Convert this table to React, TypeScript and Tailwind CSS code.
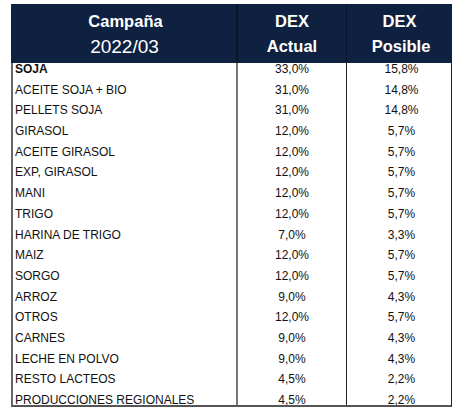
const rows: [string, string, string][] = [
  ["SOJA", "33,0%", "15,8%"],
  ["ACEITE SOJA + BIO", "31,0%", "14,8%"],
  ["PELLETS SOJA", "31,0%", "14,8%"],
  ["GIRASOL", "12,0%", "5,7%"],
  ["ACEITE GIRASOL", "12,0%", "5,7%"],
  ["EXP, GIRASOL", "12,0%", "5,7%"],
  ["MANI", "12,0%", "5,7%"],
  ["TRIGO", "12,0%", "5,7%"],
  ["HARINA DE TRIGO", "7,0%", "3,3%"],
  ["MAIZ", "12,0%", "5,7%"],
  ["SORGO", "12,0%", "5,7%"],
  ["ARROZ", "9,0%", "4,3%"],
  ["OTROS", "12,0%", "5,7%"],
  ["CARNES", "9,0%", "4,3%"],
  ["LECHE EN POLVO", "9,0%", "4,3%"],
  ["RESTO LACTEOS", "4,5%", "2,2%"],
  ["PRODUCCIONES REGIONALES", "4,5%", "2,2%"],
];

export default function App() {
  return (
    <div
      className="w-[455px] h-[411px] bg-white pt-[4px] pl-[11px] overflow-hidden text-[#111]"
      style={{ fontFamily: '"Liberation Sans", Arial, sans-serif' }}
    >
      <div className="w-[441px]">
        {/* header */}
        <div className="grid grid-cols-[225px_110px_106px] h-[59px] bg-[#0f2140] text-white">
          <div className="flex flex-col items-center pt-[5px]">
            <span className="text-[16.5px] font-bold leading-[25px] pl-[4px]">Campaña</span>
            <span className="text-[19px] leading-[25px] pl-[2px]">2022/03</span>
          </div>
          <div className="flex flex-col items-center pt-[5px] border-l-2 border-[#0a1528]">
            <span className="text-[16.5px] font-bold leading-[25px]">DEX</span>
            <span className="text-[16.5px] font-bold leading-[25px]">Actual</span>
          </div>
          <div className="flex flex-col items-center pt-[5px] border-l border-[#0a1528]">
            <span className="text-[16.5px] font-bold leading-[25px]">DEX</span>
            <span className="text-[16.5px] font-bold leading-[25px] pl-[3px]">Posible</span>
          </div>
        </div>

        {/* body */}
        <div className="h-[344px] overflow-hidden border-l-2 border-r border-b-2 border-l-[#666] border-r-[#222] border-b-[#555]">
          {rows.map(([name, actual, posible], i) => (
            <div key={name} className="grid grid-cols-[223px_110px_107px] h-[20.7px] text-[12px] leading-[13px]">
              <div className={`pl-[2px] ${i === 0 ? "font-bold" : ""}`}>{name}</div>
              <div className="text-center border-l-2 border-[#777]">{actual}</div>
              <div className="text-center border-l border-[#222] pl-[3px]">{posible}</div>
            </div>
          ))}
        </div>
      </div>
    </div>
  );
}
